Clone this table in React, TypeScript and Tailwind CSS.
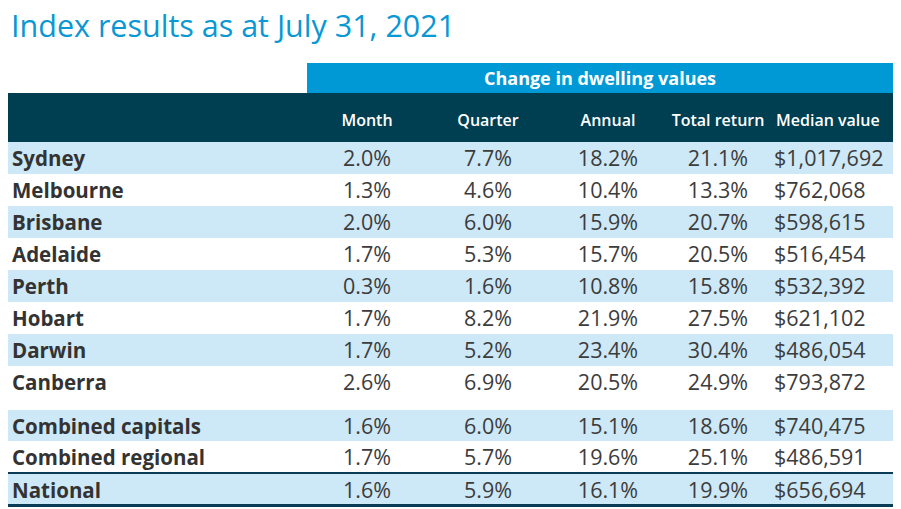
import React from "react";

const rows: [string, string, string, string, string, string][] = [
  ["Sydney", "2.0%", "7.7%", "18.2%", "21.1%", "$1,017,692"],
  ["Melbourne", "1.3%", "4.6%", "10.4%", "13.3%", "$762,068"],
  ["Brisbane", "2.0%", "6.0%", "15.9%", "20.7%", "$598,615"],
  ["Adelaide", "1.7%", "5.3%", "15.7%", "20.5%", "$516,454"],
  ["Perth", "0.3%", "1.6%", "10.8%", "15.8%", "$532,392"],
  ["Hobart", "1.7%", "8.2%", "21.9%", "27.5%", "$621,102"],
  ["Darwin", "1.7%", "5.2%", "23.4%", "30.4%", "$486,054"],
  ["Canberra", "2.6%", "6.9%", "20.5%", "24.9%", "$793,872"],
];

const combined: [string, string, string, string, string, string][] = [
  ["Combined capitals", "1.6%", "6.0%", "15.1%", "18.6%", "$740,475"],
  ["Combined regional", "1.7%", "5.7%", "19.6%", "25.1%", "$486,591"],
];

const national: [string, string, string, string, string, string] = [
  "National", "1.6%", "5.9%", "16.1%", "19.9%", "$656,694",
];

function Row({ r, shaded, h }: { r: string[]; shaded: boolean; h: string }) {
  return (
    <div
      className={`grid grid-cols-[299px_120px_122px_118px_102px_124px] items-center ${h} ${
        shaded ? "bg-[#cde8f6]" : "bg-white"
      } text-[21.5px] text-[#3c3c3c]`}
    >
      <div className="pl-[4px] font-bold text-[20.5px] text-[#333]">{r[0]}</div>
      <div className="text-center">{r[1]}</div>
      <div className="text-center">{r[2]}</div>
      <div className="text-center">{r[3]}</div>
      <div className="text-center">{r[4]}</div>
      <div className="pl-[5px]">{r[5]}</div>
    </div>
  );
}

export default function App() {
  return (
    <div
      className="w-[901px] h-[509px] bg-white overflow-hidden"
      style={{ fontFamily: '"Open Sans", "Noto Sans", sans-serif' }}
    >
      <div className="pl-[11px] pt-[4px] h-[63px] text-[30.5px] leading-[42px] text-[#0a98d4]">
        Index results as at July 31, 2021
      </div>
      <div className="ml-[8px] w-[885px]">
        <div className="flex h-[30px]">
          <div className="w-[299px]" />
          <div className="flex-1 bg-[#0099d6] flex items-center justify-center text-white font-bold text-[18px]">
            Change in dwelling values
          </div>
        </div>
        <div className="grid grid-cols-[299px_120px_122px_118px_102px_124px] items-center h-[49px] bg-[#003e51] text-white font-semibold text-[16px] pt-[4px]">
          <div />
          <div className="text-center">Month</div>
          <div className="text-center">Quarter</div>
          <div className="text-center">Annual</div>
          <div className="text-center">Total return</div>
          <div className="pl-[7px]">Median value</div>
        </div>
        {rows.map((r, i) => (
          <Row key={r[0]} r={r} shaded={i % 2 === 0} h="h-[32px]" />
        ))}
        <div className="h-[12px]" />
        <Row r={combined[0]} shaded={true} h="h-[31px]" />
        <Row r={combined[1]} shaded={false} h="h-[31px]" />
        <div className="border-t-[2px] border-b-[3px] border-[#0b3b55]">
          <Row r={national} shaded={true} h="h-[30px]" />
        </div>
      </div>
    </div>
  );
}
